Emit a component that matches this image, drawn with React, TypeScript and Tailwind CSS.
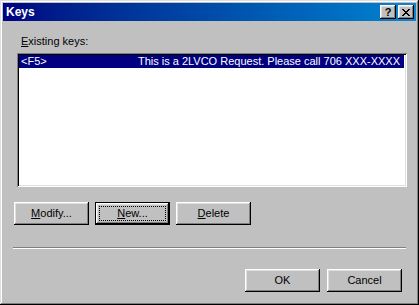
import React from "react";

const raised =
  "shadow-[inset_-1px_-1px_#000000,inset_1px_1px_#ffffff,inset_-2px_-2px_#808080,inset_2px_2px_#dfdfdf]";

const Btn: React.FC<{ label: React.ReactNode; def?: boolean }> = ({ label, def }) => {
  if (def) {
    return (
      <div className="w-[75px] h-[23px] border border-black bg-[#c0c0c0]">
        <div className={`w-full h-full ${raised} p-[3px]`}>
          <div className="w-full h-full border border-dotted border-black flex items-center justify-center text-[11px] text-black">
            {label}
          </div>
        </div>
      </div>
    );
  }
  return (
    <div
      className={`w-[75px] h-[23px] bg-[#c0c0c0] ${raised} flex items-center justify-center text-[11px] text-black`}
    >
      {label}
    </div>
  );
};

const TitleBtn: React.FC<{ children: React.ReactNode }> = ({ children }) => (
  <div
    className={`w-[16px] h-[14px] bg-[#c0c0c0] ${raised} flex items-center justify-center`}
  >
    {children}
  </div>
);

export default function App() {
  return (
    <div
      className="w-[419px] h-[305px] bg-[#c0c0c0] p-[3px] flex flex-col shadow-[inset_-1px_-1px_#000000,inset_1px_1px_#dfdfdf,inset_-2px_-2px_#808080,inset_2px_2px_#ffffff]"
      style={{ fontFamily: '"Liberation Sans", Arial, sans-serif' }}
    >
      {/* title bar */}
      <div className="h-[18px] bg-gradient-to-r from-[#000080] to-[#1084d0] flex items-center justify-between pl-[3px] pr-[2px]">
        <span className="text-white font-bold text-[12px] leading-none">Keys</span>
        <div className="flex gap-[2px]">
          <TitleBtn>
            <span className="text-[11px] font-bold text-black leading-none mt-[1px]">?</span>
          </TitleBtn>
          <TitleBtn>
            <svg width="8" height="7" viewBox="0 0 8 7">
              <path d="M0 0h2v1h1v1h2v-1h1v-1h2v1h-1v1h-1v1h-1v1h1v1h1v1h1v1h-2v-1h-1v-1h-2v1h-1v1h-2v-1h1v-1h1v-1h1v-1h-1v-1h-1v-1h-1z" fill="#000" />
            </svg>
          </TitleBtn>
        </div>
      </div>

      {/* content */}
      <div className="flex-1 flex flex-col pl-[10px] pr-[10px]">
        <div className="mt-[13px] pl-[8px] text-[11px] leading-[14px] text-black">
          <span className="underline">E</span>xisting keys:
        </div>

        <div className="mt-[5px] ml-[4px] w-[390px] h-[134px] bg-white p-[2px] shadow-[inset_1px_1px_#808080,inset_-1px_-1px_#ffffff,inset_2px_2px_#000000,inset_-2px_-2px_#dfdfdf]">
          <div className="h-[13px] mr-[1px] bg-[#000080] text-white text-[11px] leading-[13px] flex justify-between pl-[2px] pr-[4px] overflow-hidden whitespace-nowrap">
            <span>&lt;F5&gt;</span>
            <span>This is a 2LVCO Request. Please call 706 XXX-XXXX</span>
          </div>
        </div>

        <div className="mt-[15px] ml-[1px] flex gap-[6px]">
          <Btn label={<span><span className="underline">M</span>odify...</span>} />
          <Btn def label={<span><span className="underline">N</span>ew...</span>} />
          <Btn label={<span><span className="underline">D</span>elete</span>} />
        </div>

        <div className="mt-[22px] h-[2px] border-t border-[#808080] border-b border-b-white w-[393px]" />

        <div className="mt-[20px] flex justify-end gap-[7px] pr-[4px]">
          <Btn label="OK" />
          <Btn label="Cancel" />
        </div>
      </div>
    </div>
  );
}
